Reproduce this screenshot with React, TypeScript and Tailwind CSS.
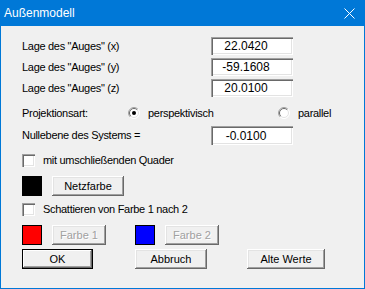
import type { ReactNode } from "react";

const sunken =
  "bg-white shadow-[inset_1px_1px_0_#a0a0a0,inset_2px_2px_0_#696969,inset_-1px_-1px_0_#ffffff,inset_-2px_-2px_0_#e3e3e3]";
const raised =
  "bg-[#f0f0f0] shadow-[inset_-1px_-1px_0_#696969,inset_1px_1px_0_#ffffff,inset_-2px_-2px_0_#a0a0a0,inset_2px_2px_0_#e3e3e3]";
const raisedDefault =
  "bg-[#f0f0f0] shadow-[inset_0_0_0_1px_#000000,inset_-2px_-2px_0_#696969,inset_2px_2px_0_#ffffff,inset_-3px_-3px_0_#a0a0a0]";

function Field({ value, tall }: { value: string; tall?: boolean }) {
  return (
    <div
      className={`flex w-[82px] items-center justify-center pr-3 text-[12px] tracking-normal ${sunken} ${
        tall ? "h-[19px]" : "h-[18px]"
      }`}
    >
      {value}
    </div>
  );
}

function Check() {
  return <div className={`h-[13px] w-[13px] shrink-0 ${sunken}`} />;
}

function Radio({ checked }: { checked?: boolean }) {
  return (
    <svg width="12" height="12" viewBox="0 0 12 12" className="shrink-0">
      <circle cx="6" cy="6" r="5.5" fill="#fff" stroke="#ffffff" />
      <path d="M2.1 9.9 A5.5 5.5 0 0 1 9.9 2.1" stroke="#a0a0a0" fill="none" />
      <path d="M2.8 9.2 A4.5 4.5 0 0 1 9.2 2.8" stroke="#696969" fill="none" />
      <path d="M9.2 2.8 A4.5 4.5 0 0 1 2.8 9.2" stroke="#e3e3e3" fill="none" />
      {checked && <circle cx="6" cy="6" r="2" fill="#000" />}
    </svg>
  );
}

function Btn({ w, children, disabled, def }: { w: string; children: ReactNode; disabled?: boolean; def?: boolean }) {
  return (
    <div
      className={`flex h-[20px] items-center justify-center tracking-normal ${w} ${def ? raisedDefault : raised} ${
        disabled ? "text-[#a0a0a0] [text-shadow:1px_1px_0_#ffffff]" : "text-black"
      }`}
    >
      {children}
    </div>
  );
}

function Swatch({ color }: { color: string }) {
  return <div className={`h-[20px] w-[20px] shrink-0 border border-black ${color}`} />;
}

export default function App() {
  return (
    <div className="flex h-[289px] w-[365px] flex-col bg-[#0078d7] [font-family:'Liberation_Sans',Arial,sans-serif]">
      <div className="flex h-[26px] shrink-0 items-center justify-between pl-[4px] pr-[10px] text-[12px] text-white">
        <span>Außenmodell</span>
        <svg width="11" height="11" viewBox="0 0 11 11">
          <path d="M0.5 0.5 L10.5 10.5 M10.5 0.5 L0.5 10.5" stroke="#fff" strokeWidth="1" />
        </svg>
      </div>

      <div className="mx-[1px] mb-[1px] flex-1 bg-[#f0f0f0] pl-[21px] pt-[11px] text-[11px] tracking-[-0.3px] text-black">
        {["x", "y", "z"].map((a, i) => (
          <div key={a} className="flex h-[21px] items-start">
            <span className="w-[189px] leading-[18px]">Lage des "Auges" ({a})</span>
            <Field value={["22.0420", "-59.1608", "20.0100"][i]} />
          </div>
        ))}

        <div className="mt-[4px] flex h-[18px] items-center">
          <span className="w-[106px]">Projektionsart:</span>
          <Radio checked />
          <span className="ml-[8px] w-[130px]">perspektivisch</span>
          <Radio />
          <span className="ml-[8px]">parallel</span>
        </div>

        <div className="mt-[4px] flex h-[19px] items-center">
          <span className="w-[189px]">Nullebene des Systems =</span>
          <Field value="-0.0100" tall />
        </div>

        <div className="mt-[9px] flex h-[13px] items-center">
          <Check />
          <span className="ml-[8px]">mit umschließenden Quader</span>
        </div>

        <div className="mt-[9px] flex h-[20px] items-center">
          <div className="h-[20px] w-[20px] bg-black" />
          <div className="ml-[10px]">
            <Btn w="w-[72px]">Netzfarbe</Btn>
          </div>
        </div>

        <div className="mt-[7px] flex h-[13px] items-center">
          <Check />
          <span className="ml-[8px]">Schattieren von Farbe 1 nach 2</span>
        </div>

        <div className="mt-[9px] flex h-[20px] items-center">
          <Swatch color="bg-[#ff0000]" />
          <div className="ml-[10px]">
            <Btn w="w-[54px]" disabled>
              Farbe 1
            </Btn>
          </div>
          <div className="ml-[29px]">
            <Swatch color="bg-[#0000ff]" />
          </div>
          <div className="ml-[10px]">
            <Btn w="w-[54px]" disabled>
              Farbe 2
            </Btn>
          </div>
        </div>

        <div className="mt-[4px] flex h-[20px] items-center">
          <Btn w="w-[71px]" def>
            OK
          </Btn>
          <div className="ml-[42px]">
            <Btn w="w-[72px]">Abbruch</Btn>
          </div>
          <div className="ml-[40px]">
            <Btn w="w-[78px]">Alte Werte</Btn>
          </div>
        </div>
      </div>
    </div>
  );
}
